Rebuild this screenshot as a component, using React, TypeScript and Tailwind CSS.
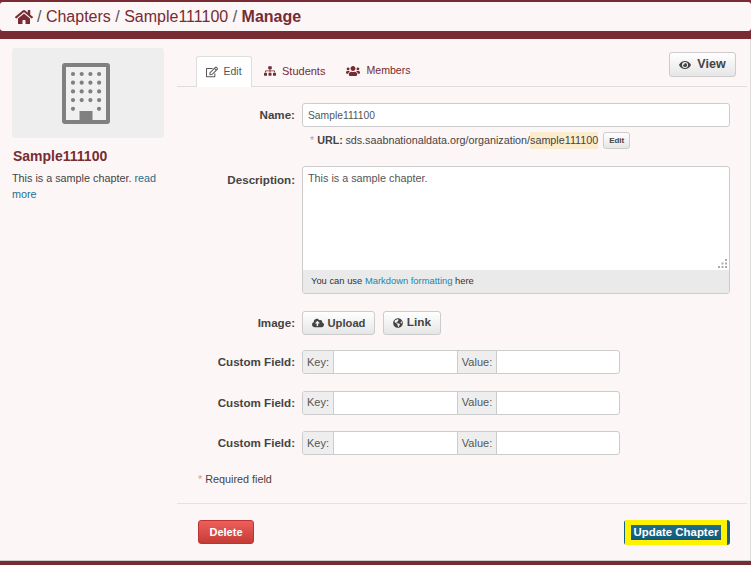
import { FaCloudUploadAlt, FaEye, FaGlobeAmericas, FaHome, FaRegEdit, FaSitemap, FaUsers } from 'react-icons/fa';

function BuildingIcon() {
  const dots: [number, number][] = [];
  for (let r = 0; r < 4; r++) {
    for (let c = 0; c < 4; c++) dots.push([73 + c * 8.7, 74 + r * 8.7]);
  }
  dots.push([73, 108.8], [99, 108.8]);
  return (
    <svg viewBox="62 63 49 61" className="-ml-1 h-[61px] w-[49px]">
      <rect x="64" y="65" width="44" height="57" rx="1" fill="#f0f0f0" stroke="#808080" strokeWidth="4" />
      {dots.map(([cx, cy]) => (
        <circle key={`${cx}-${cy}`} cx={cx} cy={cy} r="2.1" fill="#808080" />
      ))}
      <rect x="79.5" y="111" width="13" height="11" fill="#808080" />
    </svg>
  );
}

function ResizeGrip() {
  return (
    <svg viewBox="0 0 9 9" className="absolute right-[2px] bottom-[2px] h-[9px] w-[9px]" fill="#aaa">
      <rect x="7" y="0" width="2" height="2" />
      <rect x="3.5" y="3.5" width="2" height="2" />
      <rect x="7" y="3.5" width="2" height="2" />
      <rect x="0" y="7" width="2" height="2" />
      <rect x="3.5" y="7" width="2" height="2" />
      <rect x="7" y="7" width="2" height="2" />
    </svg>
  );
}

function CustomField() {
  return (
    <div className="flex items-center">
      <label className="w-[118px] text-right text-[11.6px] font-bold text-[#444]">Custom Field:</label>
      <div className="ml-[7px] flex h-6 w-[318px] overflow-hidden rounded-[3px] border border-[#ccc] bg-white text-[11px]">
        <span className="flex w-[31px] items-center justify-center border-r border-[#ccc] bg-[#eee] text-[#555]">Key:</span>
        <span className="w-[123px]" />
        <span className="flex w-[40px] items-center justify-center border-x border-[#ccc] bg-[#eee] text-[#555]">Value:</span>
      </div>
    </div>
  );
}

export default function App() {
  return (
    <div className="flex h-[565px] w-[751px] flex-col overflow-hidden bg-[#fdf6f6] font-['Liberation_Sans',sans-serif] text-[#444]">
      {/* BREADCRUMB */}
      <div className="border-t-2 border-b-8 border-t-[#772b32] border-b-[#772b32] bg-[#772b32]">
        <div className="flex h-[29px] items-center rounded-[3px] bg-[#fdf6f6] pl-[15px] text-base text-[#772b32]">
          <FaHome className="mr-[4px] text-[18px]" />
          <span className="text-[#555]">/&nbsp;</span>
          <span>Chapters</span>
          <span className="text-[#555]">&nbsp;/&nbsp;</span>
          <span>Sample111100</span>
          <span className="text-[#555]">&nbsp;/&nbsp;</span>
          <span className="font-bold">Manage</span>
        </div>
      </div>

      <div className="flex flex-1 border-r border-[#ddd] pr-[3px]">
        {/* SIDEBAR */}
        <aside className="w-[177px] shrink-0 px-3 pt-[9px]">
          <div className="flex h-[90px] w-[152px] items-center justify-center rounded-[3px] bg-[#eee]">
            <BuildingIcon />
          </div>
          <h2 className="mt-[8px] ml-px text-sm font-bold text-[#772b32]">Sample111100</h2>
          <p className="mt-[4px] text-[10.8px] leading-4 text-[#444]">
            This is a sample chapter. <span className="text-[#1d6f8c]">read</span>{' '}
            <span className="text-[#1d6f8c]">more</span>
          </p>
        </aside>

        {/* MAIN */}
        <main className="flex min-w-0 flex-1 flex-col">
          <div className="relative flex h-[48px] items-end border-b border-[#ddd] pl-[19px] text-[11px]">
            <div className="-mb-px flex h-[31px] w-[56px] items-center justify-center gap-[5px] rounded-t-[3px] border border-b-0 border-[#ddd] bg-white text-[#555]">
              <FaRegEdit className="text-xs" /> <span className="text-[10.5px]">Edit</span>
            </div>
            <div className="flex h-[30px] items-center gap-[6px] px-3 text-[#772b32]">
              <FaSitemap className="text-xs" /> Students
            </div>
            <div className="flex h-[30px] items-center gap-[6px] px-[9px] text-[10.6px] text-[#772b32]">
              <FaUsers className="text-sm" /> Members
            </div>
            <button className="absolute top-[13px] right-[11px] flex h-[25px] w-[67px] items-center justify-center gap-[6px] rounded-[3px] border border-[#ccc] bg-gradient-to-b from-white to-[#e6e6e6] text-[12.5px] font-bold">
              <FaEye className="text-xs" /> View
            </button>
          </div>

          <form className="flex flex-1 flex-col">
            <div className="mt-[16px] flex items-center">
              <label className="w-[118px] text-right text-[11.6px] font-bold">Name:</label>
              <div className="ml-[7px] flex h-6 w-[428px] items-center rounded-[3px] border border-[#ccc] bg-white px-[5px] pt-px text-[10.3px] text-[#555]">
                Sample111100
              </div>
            </div>
            <div className="mt-[4px] ml-[133px] flex h-[19px] items-center text-[10.75px]">
              <span className="mr-[3px] text-[#c99]">*</span>
              <span className="mr-[2.5px] font-bold">URL:</span>
              <span>sds.saabnationaldata.org/organization/</span>
              <span className="bg-[#fbeccd]">sample111100</span>
              <span className="ml-[5px] flex h-[17px] w-[27px] items-center justify-center rounded-[3px] border border-[#ccc] bg-gradient-to-b from-white to-[#e6e6e6] text-[8px] font-bold">Edit</span>
            </div>

            <div className="mt-[16px] flex items-start">
              <label className="mt-[5px] w-[118px] text-right text-[11.6px] font-bold">Description:</label>
              <div className="ml-[7px] w-[428px] overflow-hidden rounded-[3px] border border-[#ccc] bg-white text-[10.8px]">
                <div className="relative h-[103px] px-[5px] pt-[3px] text-[#555]">
                  This is a sample chapter.
                  <ResizeGrip />
                </div>
                <div className="flex h-[23px] items-center bg-[#eaeaea] pl-2 text-[9.4px] text-[#333]">
                  You can use&nbsp;<span className="text-[#1d84a8]">Markdown formatting</span>&nbsp;here
                </div>
              </div>
            </div>

            <div className="mt-[17px] flex items-center">
              <label className="w-[118px] text-right text-[11.6px] font-bold">Image:</label>
              <div className="ml-[7px] flex gap-[8px] text-[11.2px] font-bold">
                <button type="button" className="flex h-6 w-[73px] items-center justify-center gap-1 rounded-[3px] border border-[#ccc] bg-gradient-to-b from-white to-[#e6e6e6]">
                  <FaCloudUploadAlt className="text-xs" /> Upload
                </button>
                <button type="button" className="flex h-6 w-[58px] items-center justify-center gap-1 rounded-[3px] border border-[#ccc] bg-gradient-to-b from-white to-[#e6e6e6]">
                  <FaGlobeAmericas className="text-[10px]" /> <span className="text-[11.8px]">Link</span>
                </button>
              </div>
            </div>

            <div className="mt-[15px] flex flex-col gap-[16.5px]">
              <CustomField />
              <CustomField />
              <CustomField />
            </div>

            <p className="mt-[16px] ml-[21px] text-[10.8px] text-[#444]">
              <span className="text-[#c99]">*</span> Required field
            </p>

            <div className="mt-[16px] flex flex-1 items-start justify-between border-t border-[#e3e3e3] pt-4 pr-[17px] pl-[21px]">
              <button type="button" className="flex h-6 w-[56px] items-center justify-center rounded-[3px] border border-[#b33] bg-gradient-to-b from-[#ee5f5b] to-[#c43c35] text-[11px] font-bold text-white">
                Delete
              </button>
              <button type="button" className="flex h-[25px] w-[106px] rounded-[3px] bg-[#17607f] pr-[3px] pl-px">
                <span className="flex flex-1 items-center justify-center border-x-[6px] border-y-[5px] border-[#fff200] bg-gradient-to-b from-[#1f6f8c] to-[#10587a] text-[11.4px] font-bold whitespace-nowrap text-white">
                  Update Chapter
                </span>
              </button>
            </div>
          </form>
        </main>
      </div>
      <div className="h-[5px] shrink-0 border-t border-[#ccc] bg-[#772b32]" />
    </div>
  );
}
